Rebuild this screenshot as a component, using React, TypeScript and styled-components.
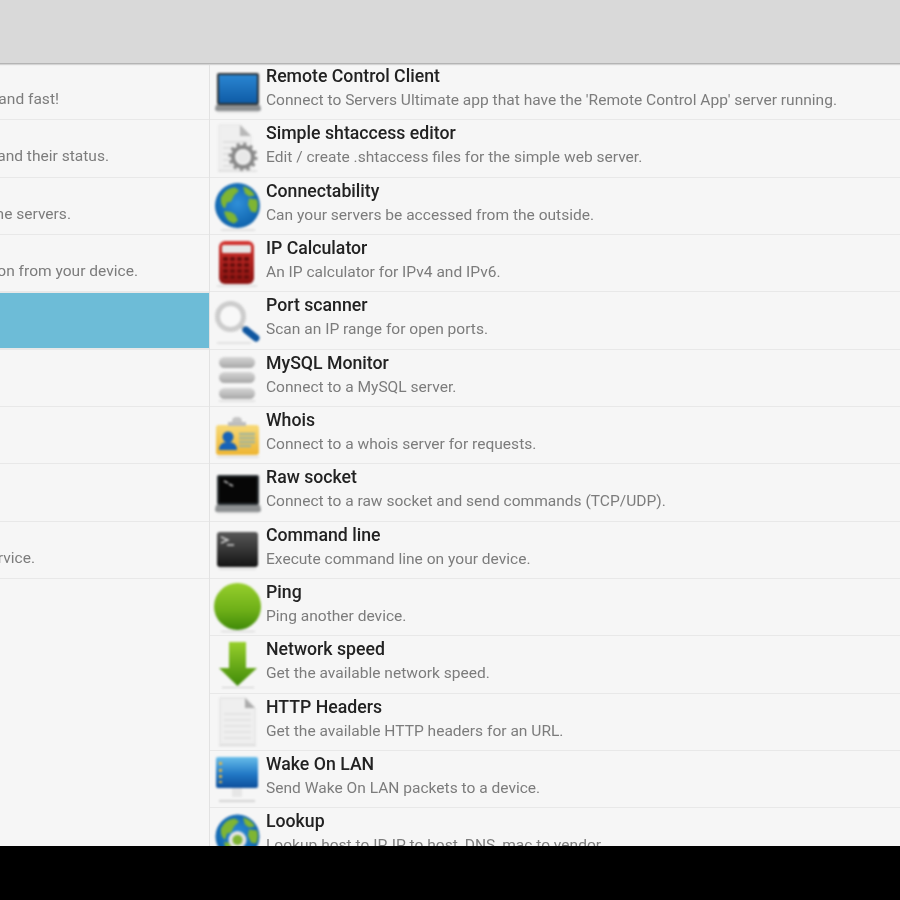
import React from "react";
import styled, { createGlobalStyle } from "styled-components";

const Global = createGlobalStyle`
  html, body { margin: 0; padding: 0; background: #000; }
  #root { width: 900px; height: 900px; overflow: hidden; }
`;

const Page = styled.div`
  width: 900px;
  height: 900px;
  display: flex;
  flex-direction: column;
  font-family: Roboto, "Liberation Sans", sans-serif;
  background: #f6f6f6;
`;
const Header = styled.header`
  flex: none;
  height: 63px;
  position: relative;
  z-index: 2;
  background: #d9d9d9;
  box-shadow: 0 1px 0 #b4b4b4, 0 2px 1px #d4d4d4;
`;
const Main = styled.main`
  flex: 1;
  min-height: 0;
  display: grid;
  grid-template-columns: 209px 1fr;
  overflow: hidden;
`;
const Footer = styled.footer`
  flex: none;
  height: 54px;
  background: #000;
  position: relative;
  z-index: 2;
`;
const LeftPane = styled.div`
  overflow: hidden;
`;
const RightPane = styled.div`
  border-left: 1px solid #e2e2e2;
  overflow: hidden;
`;
const LeftRow = styled.div<{ $selected?: boolean }>`
  box-sizing: border-box;
  height: 57.35px;
  padding-top: 27px;
  background: ${(p) => (p.$selected ? "#6dbcd7" : "transparent")};
  background-clip: padding-box;
  border-top: ${(p) => (p.$selected ? "1px solid #e8e8e8" : "0")};
  border-bottom: ${(p) => (p.$selected ? 2 : 1)}px solid #e8e8e8;
`;
const LeftText = styled.div<{ $end: number }>`
  width: ${(p) => p.$end}px;
  display: flex;
  justify-content: flex-end;
`;
const Sub = styled.div`
  font-size: 15.55px;
  line-height: 18px;
  color: #7c7c7c;
  white-space: nowrap;
  filter: blur(0.75px);
`;
const Row = styled.div`
  box-sizing: border-box;
  height: 57.35px;
  display: flex;
  align-items: flex-start;
  gap: 3px;
  padding-left: 3px;
  border-bottom: 1px solid #e8e8e8;
`;
const IconBox = styled.svg`
  flex: none;
  width: 50px;
  height: 56px;
  filter: blur(0.8px);
`;
const TextCol = styled.div`
  padding-top: 3px;
  display: flex;
  flex-direction: column;
  gap: 5px;
  min-width: 0;
`;
const Title = styled.div`
  font-size: 17.7px;
  line-height: 20px;
  font-weight: 500;
  color: #222;
  white-space: nowrap;
  filter: blur(0.7px);
`;

const Shadow = ({ y = 52, x1 = 5, x2 = 45 }: { y?: number; x1?: number; x2?: number }) => (
  <line x1={x1} x2={x2} y1={y} y2={y} stroke="#d2d2d2" strokeWidth="1.2" />
);

const Laptop = ({ dark }: { dark?: boolean }) => (
  <IconBox viewBox="0 0 50 56">
    <defs>
      <linearGradient id="lapBlue" x1="0" x2="0" y1="0" y2="1">
        <stop offset="0" stopColor="#2a86d2" />
        <stop offset="1" stopColor="#0f5ca6" />
      </linearGradient>
    </defs>
    <rect x="4" y={dark ? 11 : 10} width="42" height={dark ? 30 : 32} rx="2" fill="#2c3236" />
    <rect x="6" y={dark ? 13 : 12} width="38" height={dark ? 26 : 28} fill={dark ? "#060606" : "url(#lapBlue)"} />
    {dark && <path d="M11 17 l4 2 M16 20 l4 2" stroke="#c4c4c4" strokeWidth="1.6" />}
    <path d={dark ? "M3 41h44l1 5q0 2-2 2H4q-2 0-2-2z" : "M3 42h44l1 4q0 2-2 2H4q-2 0-2-2z"} fill="#8d9092" />
    <Shadow y={49} x1={4} x2={46} />
  </IconBox>
);

const DocGear = () => (
  <IconBox viewBox="0 0 50 56">
    <path d="M6 5h22l10 11v34H6z" fill="#efefef" stroke="#e4e4e4" />
    <path d="M27 5l11 11H27z" fill="#b8b8b8" />
    <path d="M10 22h24M10 28h24M10 34h12M10 40h12M10 46h14" stroke="#e0e0e0" strokeWidth="2" />
    <circle cx="30" cy="37" r="10" fill="none" stroke="#8a8a8a" strokeWidth="4" />
    <circle cx="30" cy="37" r="13" fill="none" stroke="#8a8a8a" strokeWidth="3" strokeDasharray="3 3.8" />
    <circle cx="30" cy="37" r="6" fill="#e8e8e8" />
    <Shadow y={51} x1={5} x2={44} />
  </IconBox>
);

const GlobeShape = ({ id, cy, r }: { id: string; cy: number; r: number }) => (
  <>
    <defs>
      <radialGradient id={id} cx="0.5" cy="0.45" r="0.6">
        <stop offset="0" stopColor="#2f8fd8" />
        <stop offset="1" stopColor="#0b5ea8" />
      </radialGradient>
    </defs>
    <circle cx="24.5" cy={cy} r={r} fill={`url(#${id})`} />
    <g fill="#7fb533">
      <path d={`M8 ${cy - 8}q5-10 14-10l4 3-5 5-3 6-4 1-2 6q-5-3-4-11z`} />
      <path d={`M30 ${cy - 19}q8 2 12 9l-6 1-4-3z`} />
      <path d={`M36 ${cy - 7}l8 1q2 7-1 13l-5-1-3-7z`} />
      <path d={`M11 ${cy + 6}q6-1 11 3l3 6-4 3q-8-2-10-12z`} />
    </g>
  </>
);

const Globe = () => (
  <IconBox viewBox="0 0 50 56">
    <GlobeShape id="globeA" cy={27.5} r={22.5} />
    <Shadow y={52} x1={8} x2={42} />
  </IconBox>
);

const Calculator = () => (
  <IconBox viewBox="0 0 50 56">
    <defs>
      <linearGradient id="calc" x1="0" x2="0" y1="0" y2="1">
        <stop offset="0" stopColor="#d4322e" />
        <stop offset="1" stopColor="#8a1210" />
      </linearGradient>
    </defs>
    <rect x="6" y="6" width="35" height="43" rx="6" fill="url(#calc)" />
    <rect x="9" y="10" width="29" height="8" rx="1.5" fill="#e6e6e6" />
    <g fill="#6a0f0d">
      {[22, 28, 34, 40].map((y) =>
        [10, 17, 24, 31].map((x) => <rect key={`${x}-${y}`} x={x} y={y} width="5" height="4" rx="1" />)
      )}
    </g>
    <Shadow y={51} x1={4} x2={44} />
  </IconBox>
);

const Magnifier = () => (
  <IconBox viewBox="0 0 50 56">
    <circle cx="17.5" cy="24.5" r="13" fill="#f8f8f8" stroke="#cdcdcd" strokeWidth="5" />
    <path d="M28 34l4 3" stroke="#c4c4c4" strokeWidth="4" />
    <path d="M33 38l10 8" stroke="#0f56a0" strokeWidth="7" strokeLinecap="round" />
    <Shadow y={51} x1={4} x2={38} />
  </IconBox>
);

const Database = () => (
  <IconBox viewBox="0 0 50 56">
    <defs>
      <linearGradient id="disc" x1="0" x2="0" y1="0" y2="1">
        <stop offset="0" stopColor="#d6d6d6" />
        <stop offset="1" stopColor="#a8a8a8" />
      </linearGradient>
    </defs>
    <rect x="6" y="7" width="36" height="11" rx="5.5" fill="url(#disc)" />
    <rect x="6" y="22" width="36" height="11" rx="5.5" fill="url(#disc)" />
    <rect x="6" y="38" width="36" height="11" rx="5.5" fill="url(#disc)" />
    <Shadow y={51} x1={6} x2={42} />
  </IconBox>
);

const IdCard = () => (
  <IconBox viewBox="0 0 50 56">
    <defs>
      <linearGradient id="card" x1="0" x2="0" y1="0" y2="1">
        <stop offset="0" stopColor="#f7d978" />
        <stop offset="1" stopColor="#eeb532" />
      </linearGradient>
    </defs>
    <path d="M19 18v-4q0-4 5-4t5 4v4z" fill="#c4c4c4" />
    <rect x="3" y="18" width="43" height="30" rx="3" fill="url(#card)" />
    <rect x="15" y="15" width="18" height="4" fill="#bdbdbd" />
    <circle cx="15" cy="30" r="5.5" fill="#1763b8" />
    <path d="M6 43q0-8 9-8t9 8z" fill="#1763b8" />
    <path d="M26 27h16M26 31h16M26 35h16M26 39h12" stroke="#a3b59a" strokeWidth="2.4" />
    <Shadow y={50} x1={4} x2={46} />
  </IconBox>
);

const Terminal = () => (
  <IconBox viewBox="0 0 50 56">
    <defs>
      <linearGradient id="term" x1="0" x2="0" y1="0" y2="1">
        <stop offset="0" stopColor="#585858" />
        <stop offset="1" stopColor="#141414" />
      </linearGradient>
    </defs>
    <rect x="4" y="10" width="41" height="35" rx="3" fill="url(#term)" />
    <path d="M8 15l7 3-7 3M14 23h7" stroke="#d8d8d8" strokeWidth="1.4" fill="none" />
    <Shadow y={47} x1={6} x2={43} />
  </IconBox>
);

const PingBall = () => (
  <IconBox viewBox="0 0 50 56">
    <defs>
      <linearGradient id="ball" x1="0" x2="0" y1="0" y2="1">
        <stop offset="0" stopColor="#97cf2c" />
        <stop offset="0.6" stopColor="#6cae17" />
        <stop offset="1" stopColor="#3f8a08" />
      </linearGradient>
    </defs>
    <circle cx="24.5" cy="27.5" r="23.5" fill="url(#ball)" />
    <Shadow y={52.5} x1={8} x2={42} />
  </IconBox>
);

const DownArrow = () => (
  <IconBox viewBox="0 0 50 56">
    <defs>
      <linearGradient id="arrow" x1="0" x2="0" y1="0" y2="1">
        <stop offset="0" stopColor="#97cf2c" />
        <stop offset="1" stopColor="#3f8a08" />
      </linearGradient>
    </defs>
    <path d="M16 6h17v26h11L24.5 50 6 32h10z" fill="url(#arrow)" />
    <Shadow y={51.5} x1={9} x2={41} />
  </IconBox>
);

const PlainDoc = () => (
  <IconBox viewBox="0 0 50 56">
    <path d="M7 4h26l9 10v36H7z" fill="#efefef" stroke="#dcdcdc" />
    <path d="M32 4l10 10H32z" fill="#ababab" />
    <path d="M11 20h27M11 26h27M11 32h27M11 38h27M11 44h27" stroke="#e0e0e0" strokeWidth="1.5" />
    <Shadow y={51.5} x1={6} x2={43} />
  </IconBox>
);

const Monitor = () => (
  <IconBox viewBox="0 0 50 56">
    <defs>
      <linearGradient id="screen" x1="0" x2="0" y1="0" y2="1">
        <stop offset="0" stopColor="#67bdea" />
        <stop offset="0.55" stopColor="#2279c6" />
        <stop offset="1" stopColor="#0c4f9c" />
      </linearGradient>
    </defs>
    <rect x="3" y="6" width="42" height="31" rx="2" fill="url(#screen)" />
    <g fill="#e0b64a">
      <rect x="6" y="11" width="3" height="3" />
      <rect x="6" y="18" width="3" height="3" />
      <rect x="6" y="24" width="3" height="3" />
      <rect x="6" y="30" width="3" height="2" />
    </g>
    <rect x="19" y="37" width="10" height="9" fill="#e6e6e6" />
    <path d="M6 50h36" stroke="#c8c8c8" strokeWidth="1.5" />
  </IconBox>
);

const LookupGlobe = () => (
  <IconBox viewBox="0 0 50 56">
    <GlobeShape id="globeB" cy={28.5} r={22} />
    <circle cx="24.5" cy="32" r="9" fill="#e4e4e4" />
    <circle cx="24.5" cy="32" r="5" fill="#7fb533" />
  </IconBox>
);

const leftRows: { text?: string; end?: number; selected?: boolean }[] = [
  { text: "and fast!", end: 59 },
  { text: "and their status.", end: 109 },
  { text: "he servers.", end: 71 },
  { text: "on from your device.", end: 138 },
  { selected: true },
  {},
  {},
  {},
  { text: "rvice.", end: 35 },
];

const rightRows = [
  { icon: <Laptop />, title: "Remote Control Client", sub: "Connect to Servers Ultimate app that have the 'Remote Control App' server running." },
  { icon: <DocGear />, title: "Simple shtaccess editor", sub: "Edit / create .shtaccess files for the simple web server." },
  { icon: <Globe />, title: "Connectability", sub: "Can your servers be accessed from the outside." },
  { icon: <Calculator />, title: "IP Calculator", sub: "An IP calculator for IPv4 and IPv6." },
  { icon: <Magnifier />, title: "Port scanner", sub: "Scan an IP range for open ports." },
  { icon: <Database />, title: "MySQL Monitor", sub: "Connect to a MySQL server." },
  { icon: <IdCard />, title: "Whois", sub: "Connect to a whois server for requests." },
  { icon: <Laptop dark />, title: "Raw socket", sub: "Connect to a raw socket and send commands (TCP/UDP)." },
  { icon: <Terminal />, title: "Command line", sub: "Execute command line on your device." },
  { icon: <PingBall />, title: "Ping", sub: "Ping another device." },
  { icon: <DownArrow />, title: "Network speed", sub: "Get the available network speed." },
  { icon: <PlainDoc />, title: "HTTP Headers", sub: "Get the available HTTP headers for an URL." },
  { icon: <Monitor />, title: "Wake On LAN", sub: "Send Wake On LAN packets to a device." },
  { icon: <LookupGlobe />, title: "Lookup", sub: "Lookup host to IP, IP to host, DNS, mac to vendor." },
];

export default function App() {
  return (
    <Page>
      <Global />
      <Header />
      <Main>
        <LeftPane>
          {leftRows.map((r, i) => (
            <LeftRow key={i} $selected={r.selected}>
              {r.text && (
                <LeftText $end={r.end ?? 0}>
                  <Sub>{r.text}</Sub>
                </LeftText>
              )}
            </LeftRow>
          ))}
        </LeftPane>
        <RightPane>
          {rightRows.map((r) => (
            <Row key={r.title}>
              {r.icon}
              <TextCol>
                <Title>{r.title}</Title>
                <Sub>{r.sub}</Sub>
              </TextCol>
            </Row>
          ))}
        </RightPane>
      </Main>
      <Footer />
    </Page>
  );
}
